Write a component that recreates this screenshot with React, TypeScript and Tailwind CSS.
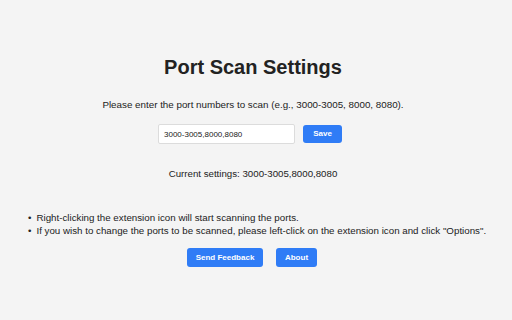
export default function App() {
  return (
    <div className="min-h-screen w-full bg-[#f4f4f4] text-[#222] font-['Liberation_Sans',Arial,sans-serif]">
      <div className="flex flex-col items-center pt-[52px] pr-[6px]">
        <h1 className="text-[20px] font-bold leading-[30px] text-[#222]">Port Scan Settings</h1>
        <p className="mt-[16px] text-[9.8px] leading-[14px]">
          Please enter the port numbers to scan (e.g., 3000-3005, 8000, 8080).
        </p>
        <div className="mt-[12px] mr-[6px] flex items-center gap-[8px]">
          <input
            defaultValue="3000-3005,8000,8080"
            className="h-[20px] w-[137px] rounded-[2px] border border-[#dcdcdc] bg-white px-[5px] text-[8px] text-[#222] outline-none"
          />
          <button className="h-[18px] w-[39px] rounded-[3px] bg-[#2f7cf6] text-[8px] font-semibold text-white">
            Save
          </button>
        </div>
        <p className="mt-[23px] text-[9.7px] leading-[14px]">Current settings: 3000-3005,8000,8080</p>
      </div>
      <ul className="mt-[30px] pl-[28px] text-[9.75px] leading-[13px]">
        <li className="flex gap-[5px]"><span>•</span><span>Right-clicking the extension icon will start scanning the ports.</span></li>
        <li className="flex gap-[5px]"><span>•</span><span>If you wish to change the ports to be scanned, please left-click on the extension icon and click "Options".</span></li>
      </ul>
      <div className="mt-[11px] flex justify-center gap-[13px] pr-[8px]">
        <button className="h-[19px] w-[76px] rounded-[3px] bg-[#2f7cf6] text-[8px] font-semibold text-white">
          Send Feedback
        </button>
        <button className="h-[19px] w-[41px] rounded-[3px] bg-[#2f7cf6] text-[8px] font-semibold text-white">
          About
        </button>
      </div>
    </div>
  );
}
